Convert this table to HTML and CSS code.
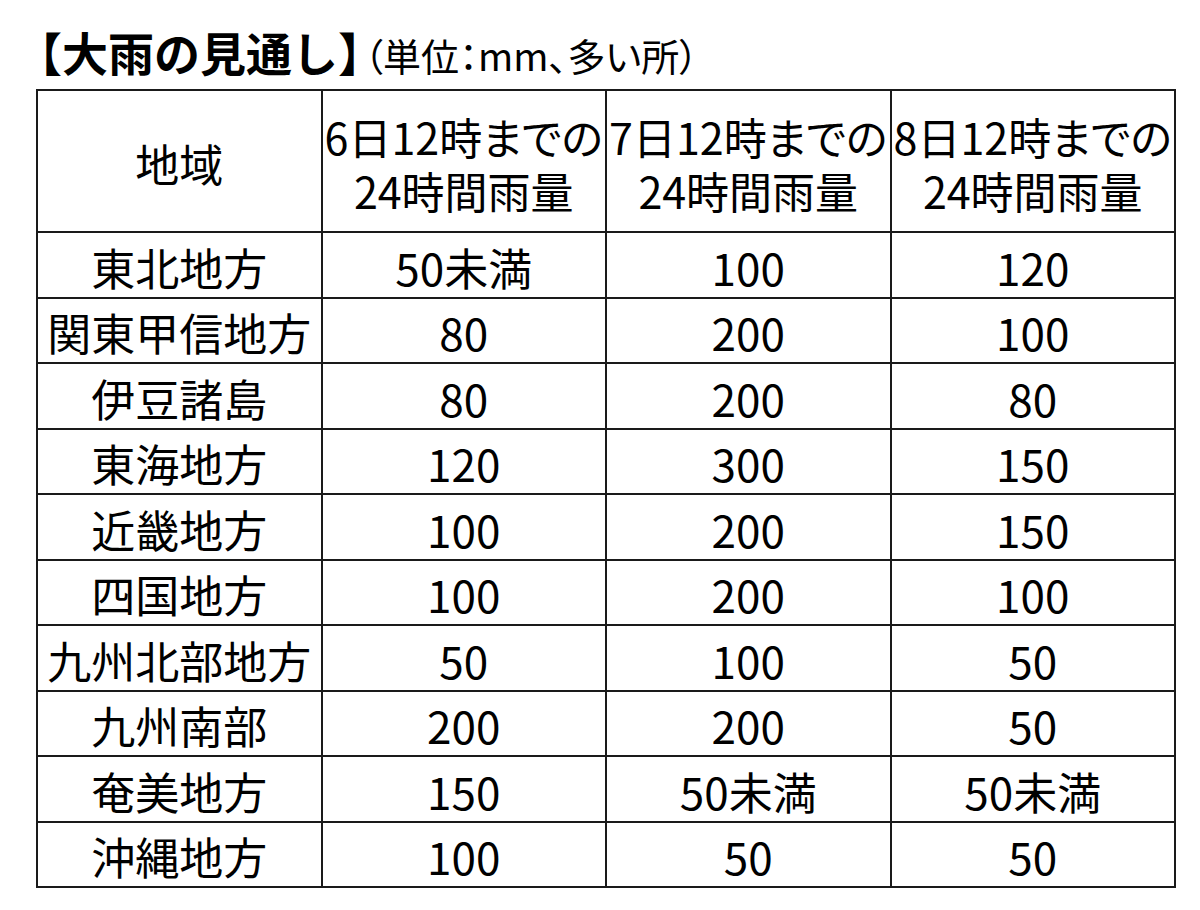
FILE: index.html
```html
<!DOCTYPE html>
<html lang="ja">
<head>
<meta charset="utf-8">
<title>大雨の見通し</title>
<link rel="stylesheet" href="styles.css">
</head>
<body>
<div class="page">
  <h1 class="title"><span class="title-main">【大雨の見通し】</span><span class="title-sub">（単位：mm、多い所）</span></h1>
  <table class="rain">
    <thead>
      <tr>
        <th class="area-head">地域</th>
        <th>6日12時までの<br>24時間雨量</th>
        <th>7日12時までの<br>24時間雨量</th>
        <th>8日12時までの<br>24時間雨量</th>
      </tr>
    </thead>
    <tbody>
      <tr><td>東北地方</td><td>50未満</td><td>100</td><td>120</td></tr>
      <tr><td>関東甲信地方</td><td>80</td><td>200</td><td>100</td></tr>
      <tr><td>伊豆諸島</td><td>80</td><td>200</td><td>80</td></tr>
      <tr><td>東海地方</td><td>120</td><td>300</td><td>150</td></tr>
      <tr><td>近畿地方</td><td>100</td><td>200</td><td>150</td></tr>
      <tr><td>四国地方</td><td>100</td><td>200</td><td>100</td></tr>
      <tr><td>九州北部地方</td><td>50</td><td>100</td><td>50</td></tr>
      <tr><td>九州南部</td><td>200</td><td>200</td><td>50</td></tr>
      <tr><td>奄美地方</td><td>150</td><td>50未満</td><td>50未満</td></tr>
      <tr><td>沖縄地方</td><td>100</td><td>50</td><td>50</td></tr>
    </tbody>
  </table>
</div>
</body>
</html>
```
FILE: styles.css
```css
* { box-sizing: border-box; }
html, body { margin: 0; padding: 0; background: #ffffff; }
body {
  font-family: "Noto Sans CJK JP", "Noto Sans", sans-serif;
  color: #000000;
}
.page {
  width: 1200px;
  height: 910px;
  padding: 21px 0 0 36px;
}
.title {
  margin: 0 0 0 -20px;
  height: 68px;
  display: flex;
  align-items: baseline;
  font-weight: normal;
  line-height: 60px;
  white-space: nowrap;
}
.title-main {
  font-size: 46px;
  font-weight: 700;
}
.title-sub {
  font-size: 38px;
  font-weight: 400;
  margin-left: -20px;
  font-feature-settings: "palt";
}
.rain {
  border-collapse: collapse;
  table-layout: fixed;
  width: 1140px;
  border: 2px solid #1a1a1a;
}
.rain th, .rain td {
  border: 2px solid #1a1a1a;
  width: 25%;
  text-align: center;
  vertical-align: middle;
  padding: 0;
  font-weight: 400;
  font-size: 44px;
  white-space: nowrap;
  overflow: hidden;
}
.rain th {
  height: 142px;
  line-height: 54px;
  font-size: 43px;
  font-feature-settings: "palt";
  padding-top: 3px;
}
.rain th.area-head {
  font-feature-settings: normal;
  font-size: 44px;
  padding-top: 4px;
}
.rain td {
  height: 65.5px;
  line-height: 56px;
  padding-top: 4px;
}
```
